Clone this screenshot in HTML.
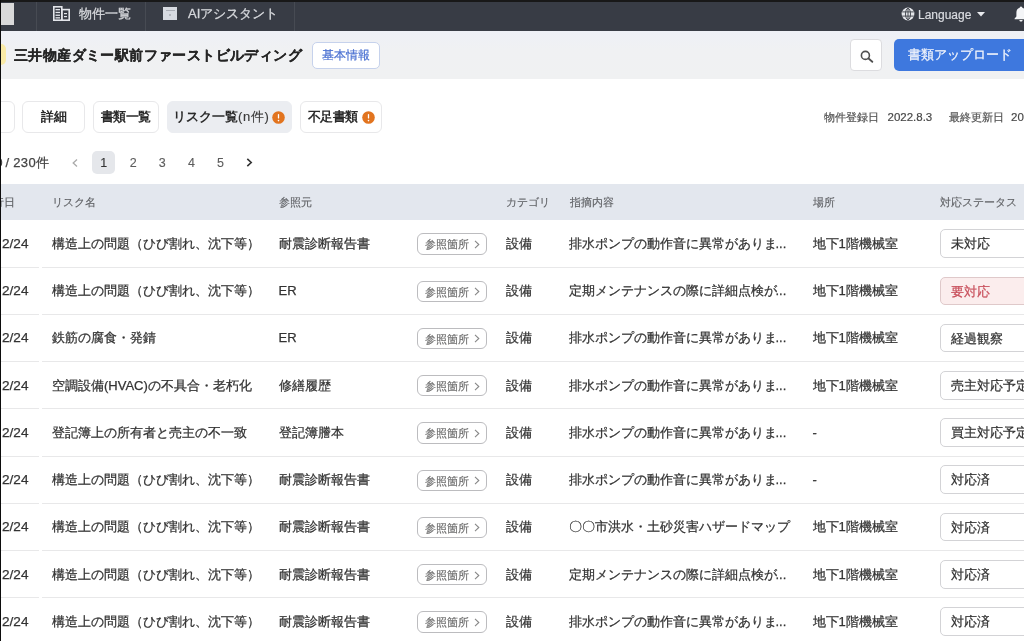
<!DOCTYPE html>
<html><head><meta charset="utf-8">
<style>
*{box-sizing:border-box;margin:0;padding:0}
html,body{width:1024px;height:641px;overflow:hidden;background:#fff;font-family:"Liberation Sans",sans-serif;color:#333}
.a{position:absolute;white-space:nowrap}
#top{position:absolute;left:0;top:0;width:1024px;height:31px;background:#383c45}
#topstrip{position:absolute;left:0;top:0;width:1024px;height:2px;background:#181818}
#leftstrip{position:absolute;left:0;top:0;width:1.4px;height:641px;background:#0c0c0c;z-index:10}
.div{position:absolute;top:2px;width:1px;height:28.5px;background:#474b53}
.navt{position:absolute;top:6px;font-size:13px;line-height:16px;color:#d6d8dc;-webkit-text-stroke:0.3px #d6d8dc}
#hdr{position:absolute;left:0;top:31px;width:1024px;height:48px;background:linear-gradient(#eef0f6,#f0f1f3 40%,#f0f1f2)}
.title{position:absolute;left:14px;top:46.3px;font-size:14px;line-height:18px;font-weight:bold;color:#262626;letter-spacing:0.4px;-webkit-text-stroke:0.2px #262626}
.btnb{position:absolute;left:311.7px;top:41.6px;width:68px;height:27px;border:1px solid #c6d2ec;border-radius:5px;background:#fff;color:#4a70d2;font-size:12px;line-height:25px;text-align:center;-webkit-text-stroke:0.2px #4a70d2}
.srch{position:absolute;left:850.4px;top:39.3px;width:32px;height:32px;border:1px solid #dcdcdf;border-radius:4px;background:#fff}
.upl{position:absolute;left:894px;top:39px;width:140px;height:32.3px;border-radius:5px;background:#3e78de;color:#f2f5fc;font-size:13px;line-height:32px;padding-left:14px;-webkit-text-stroke:0.25px #f2f5fc}
.tab{position:absolute;top:100.7px;height:32px;border:1px solid #e8e8ea;border-radius:6px;background:#fff;font-size:13px;line-height:30px;font-weight:bold;color:#2a2a2a;text-align:center;letter-spacing:-0.6px}
.tab.act{background:#ebedf1;border-color:#ebedf1}
.warn{display:inline-block;width:12.5px;height:12.5px;border-radius:50%;background:#e2731f;color:#fff;font-size:10px;line-height:12.5px;text-align:center;vertical-align:1px;margin-left:3px;font-weight:bold}
.dt{position:absolute;top:110px;font-size:11px;line-height:14px;color:#555;-webkit-text-stroke:0.2px #555}
.pg{position:absolute;top:150.5px;width:23px;height:23px;font-size:12.5px;line-height:25px;text-align:center;color:#5c5c5c;-webkit-text-stroke:0.1px currentColor}
#thead{position:absolute;left:0;top:184.4px;width:1024px;height:36px;background:#e3e7ee}
.th{position:absolute;top:195px;font-size:11px;line-height:14px;color:#606266;-webkit-text-stroke:0.15px #606266}
.row{position:absolute;left:0;width:1024px;height:47.24px;border-bottom:1px solid #e8e8e9}
.row::after{content:"";position:absolute;left:39.3px;bottom:-1px;width:2.6px;height:1px;background:#fff}
.td{position:absolute;top:15.5px;font-size:13px;line-height:16px;color:#333;-webkit-text-stroke:0.25px #333}
.ref{position:absolute;left:417.2px;top:13px;width:69.5px;height:21.3px;border:1px solid #bcbcbf;border-radius:6px;font-size:11px;line-height:20.5px;color:#6e6e6e;padding-left:7px;-webkit-text-stroke:0.2px #6e6e6e}
.ref svg{position:absolute;left:56px;top:5.5px}
.st{position:absolute;left:939.7px;top:8.9px;width:100px;height:28.7px;border:1px solid #d3d3d6;border-radius:5px;background:#fff;font-size:13px;line-height:27px;color:#333;padding-left:10px;-webkit-text-stroke:0.25px currentColor}
.st.red{background:#fbeded;border-color:#dfc9ca;color:#c9525e}
</style></head><body style="filter:blur(0.4px)">
<div id="top"></div>
<div id="topstrip"></div>
<div id="leftstrip"></div>
<div class="a" style="left:1px;top:2.5px;width:13px;height:22px;background:#d9d9d9"></div>
<div class="div" style="left:36px"></div>
<div class="div" style="left:145px"></div>
<div class="div" style="left:294px"></div>
<svg class="a" style="left:53px;top:6px" width="17" height="15" viewBox="0 0 17 15">
 <g fill="none" stroke="#e3e5ea" stroke-width="1.6">
  <rect x="0.8" y="0.8" width="8" height="13.4"/>
  <rect x="8.8" y="3.6" width="7.4" height="10.6"/>
 </g>
 <g fill="#e3e5ea"><rect x="2.5" y="3" width="4.5" height="1.3"/><rect x="2.5" y="5.8" width="4.5" height="1.3"/><rect x="2.5" y="8.6" width="4.5" height="1.3"/><rect x="2.5" y="11.2" width="4.5" height="1.3"/>
 <rect x="11" y="7" width="3" height="1.2"/><rect x="11" y="10" width="3" height="1.2"/></g>
</svg>
<div class="navt" style="left:79px">物件一覧</div>
<div class="a" style="left:163px;top:6.5px;width:14.3px;height:13.6px;background:#d6dae1"><div style="position:absolute;left:2.5px;top:3.2px;width:9px;height:1.2px;background:#a9adb5"></div><div style="position:absolute;left:6.3px;top:7.2px;width:2px;height:2px;background:#b3b7be"></div></div>
<div class="navt" style="left:188px">AIアシスタント</div>
<svg class="a" style="left:900.5px;top:7px" width="14" height="14" viewBox="0 0 14 14">
 <circle cx="7" cy="7" r="6.4" fill="#e4e6ea"/>
 <g fill="none" stroke="#3a3e46" stroke-width="0.9"><ellipse cx="7" cy="7" rx="2.5" ry="5.6"/><line x1="1.2" y1="4.9" x2="12.8" y2="4.9"/><line x1="1.2" y1="9.1" x2="12.8" y2="9.1"/><line x1="7" y1="1.2" x2="7" y2="12.8"/></g>
</svg>
<div class="navt" style="left:918px;top:6.5px;font-size:12px;color:#d9dbe0;-webkit-text-stroke:0.2px #d9dbe0">Language</div>
<svg class="a" style="left:976.5px;top:12px" width="8" height="5" viewBox="0 0 8 5"><path d="M0 0H8L4 4.5Z" fill="#e8eaee"/></svg>
<svg class="a" style="left:1014px;top:5.5px" width="14" height="16" viewBox="0 0 14 16"><path d="M7 0.5C8 0.5 8.3 1.3 8.3 1.8C10.6 2.4 11.6 4.4 11.6 6.8V10.5L13.4 12.6V13.2H0.6V12.6L2.4 10.5V6.8C2.4 4.4 3.4 2.4 5.7 1.8C5.7 1.3 6 0.5 7 0.5Z M5.4 14H8.6C8.6 15 7.9 15.5 7 15.5S5.4 15 5.4 14Z" fill="#f4f5f7"/></svg>

<div id="hdr"></div>
<div class="a" style="left:-5px;top:43.5px;width:11px;height:21.5px;border-radius:5px;background:#f9eaa6;filter:blur(0.6px)"></div>
<div class="title">三井物産ダミー駅前ファーストビルディング</div>
<div class="btnb">基本情報</div>
<div class="srch"><svg style="position:absolute;left:8.5px;top:9.5px" width="14" height="13" viewBox="0 0 14 13"><circle cx="5.4" cy="5.4" r="4" fill="none" stroke="#505050" stroke-width="1.6"/><line x1="8.3" y1="8.3" x2="12.3" y2="11.8" stroke="#505050" stroke-width="1.8" stroke-linecap="round"/></svg></div>
<div class="upl">書類アップロード</div>

<div class="tab" style="left:-40px;width:54.6px"></div>
<div class="tab" style="left:21.9px;width:63.6px">詳細</div>
<div class="tab" style="left:92.8px;width:65.8px">書類一覧</div>
<div class="tab act" style="left:166.6px;width:125.8px;text-align:left;padding-left:5.5px;letter-spacing:0">リスク一覧<span style="font-weight:normal;letter-spacing:0.6px;color:#3a3a3a;-webkit-text-stroke:0.15px #3a3a3a">(n件)</span><svg width="13" height="13" viewBox="0 0 13 13" style="position:absolute;top:9.5px;left:104.6px"><circle cx="6.5" cy="6.5" r="6.3" fill="#e2741f"/><rect x="5.85" y="3" width="1.3" height="4.6" rx="0.65" fill="#fff"/><circle cx="6.5" cy="9.6" r="0.8" fill="#fff"/></svg></div>
<div class="tab" style="left:300px;width:82px;text-align:left;padding-left:7px">不足書類<svg width="13" height="13" viewBox="0 0 13 13" style="position:absolute;top:9.5px;left:60.5px"><circle cx="6.5" cy="6.5" r="6.3" fill="#e2741f"/><rect x="5.85" y="3" width="1.3" height="4.6" rx="0.65" fill="#fff"/><circle cx="6.5" cy="9.6" r="0.8" fill="#fff"/></svg></div>

<div class="dt" style="left:823.5px">物件登録日</div>
<div class="dt" style="left:887.5px;font-size:11.5px;color:#444">2022.8.3</div>
<div class="dt" style="left:948.5px">最終更新日</div>
<div class="dt" style="left:1011px;font-size:11.5px;color:#444">2022.8.3</div>

<div class="a" style="left:-4.4px;top:154.8px;font-size:13px;line-height:16px;color:#444">0</div>
<div class="a" style="left:5.5px;top:154.8px;font-size:13px;line-height:16px;color:#444;letter-spacing:0.3px;-webkit-text-stroke:0.25px #444">/ 230件</div>
<svg class="a" style="left:72px;top:158.5px" width="6" height="8" viewBox="0 0 6 8"><path d="M5 0.5L1.2 4L5 7.5" fill="none" stroke="#aaa" stroke-width="1.3"/></svg>
<div class="pg" style="left:92.2px;background:#e5e7eb;border-radius:5px;color:#333">1</div>
<div class="pg" style="left:121.8px">2</div>
<div class="pg" style="left:150.8px">3</div>
<div class="pg" style="left:179.9px">4</div>
<div class="pg" style="left:209.1px">5</div>
<svg class="a" style="left:246px;top:157.8px" width="7" height="9" viewBox="0 0 7 9"><path d="M1.3 0.9L5.2 4.5L1.3 8.1" fill="none" stroke="#333" stroke-width="1.6"/></svg>

<div id="thead"></div>
<div class="th" style="left:-18.5px">発行日</div>
<div class="th" style="left:52px">リスク名</div>
<div class="th" style="left:278.5px">参照元</div>
<div class="th" style="left:505.5px">カテゴリ</div>
<div class="th" style="left:569.5px">指摘内容</div>
<div class="th" style="left:812.5px">場所</div>
<div class="th" style="left:940px">対応ステータス</div>

<div id="rows">
<div class="row" style="top:220.40px"><div class="td" style="left:2px;font-size:13.6px">2/24</div><div class="td" style="left:52px">構造上の問題（ひび割れ、沈下等）</div><div class="td" style="left:278.5px">耐震診断報告書</div><div class="ref">参照箇所<svg width="6" height="9" viewBox="0 0 6 9"><path d="M1 0.8L4.8 4.5L1 8.2" fill="none" stroke="#888" stroke-width="1.1"/></svg></div><div class="td" style="left:505.5px">設備</div><div class="td" style="left:569px">排水ポンプの動作音に異常がありま<span style="margin-left:-1.5px">...</span></div><div class="td" style="left:812.5px">地下1階機械室</div><div class="st ">未対応</div></div>
<div class="row" style="top:267.64px"><div class="td" style="left:2px;font-size:13.6px">2/24</div><div class="td" style="left:52px">構造上の問題（ひび割れ、沈下等）</div><div class="td" style="left:278.5px">ER</div><div class="ref">参照箇所<svg width="6" height="9" viewBox="0 0 6 9"><path d="M1 0.8L4.8 4.5L1 8.2" fill="none" stroke="#888" stroke-width="1.1"/></svg></div><div class="td" style="left:505.5px">設備</div><div class="td" style="left:569px">定期メンテナンスの際に詳細点検が<span style="margin-left:-1.5px">...</span></div><div class="td" style="left:812.5px">地下1階機械室</div><div class="st red">要対応</div></div>
<div class="row" style="top:314.88px"><div class="td" style="left:2px;font-size:13.6px">2/24</div><div class="td" style="left:52px">鉄筋の腐食・発錆</div><div class="td" style="left:278.5px">ER</div><div class="ref">参照箇所<svg width="6" height="9" viewBox="0 0 6 9"><path d="M1 0.8L4.8 4.5L1 8.2" fill="none" stroke="#888" stroke-width="1.1"/></svg></div><div class="td" style="left:505.5px">設備</div><div class="td" style="left:569px">排水ポンプの動作音に異常がありま<span style="margin-left:-1.5px">...</span></div><div class="td" style="left:812.5px">地下1階機械室</div><div class="st ">経過観察</div></div>
<div class="row" style="top:362.12px"><div class="td" style="left:2px;font-size:13.6px">2/24</div><div class="td" style="left:52px">空調設備(HVAC)の不具合・老朽化</div><div class="td" style="left:278.5px">修繕履歴</div><div class="ref">参照箇所<svg width="6" height="9" viewBox="0 0 6 9"><path d="M1 0.8L4.8 4.5L1 8.2" fill="none" stroke="#888" stroke-width="1.1"/></svg></div><div class="td" style="left:505.5px">設備</div><div class="td" style="left:569px">排水ポンプの動作音に異常がありま<span style="margin-left:-1.5px">...</span></div><div class="td" style="left:812.5px">地下1階機械室</div><div class="st ">売主対応予定</div></div>
<div class="row" style="top:409.36px"><div class="td" style="left:2px;font-size:13.6px">2/24</div><div class="td" style="left:52px">登記簿上の所有者と売主の不一致</div><div class="td" style="left:278.5px">登記簿謄本</div><div class="ref">参照箇所<svg width="6" height="9" viewBox="0 0 6 9"><path d="M1 0.8L4.8 4.5L1 8.2" fill="none" stroke="#888" stroke-width="1.1"/></svg></div><div class="td" style="left:505.5px">設備</div><div class="td" style="left:569px">排水ポンプの動作音に異常がありま<span style="margin-left:-1.5px">...</span></div><div class="td" style="left:812.5px">-</div><div class="st ">買主対応予定</div></div>
<div class="row" style="top:456.60px"><div class="td" style="left:2px;font-size:13.6px">2/24</div><div class="td" style="left:52px">構造上の問題（ひび割れ、沈下等）</div><div class="td" style="left:278.5px">耐震診断報告書</div><div class="ref">参照箇所<svg width="6" height="9" viewBox="0 0 6 9"><path d="M1 0.8L4.8 4.5L1 8.2" fill="none" stroke="#888" stroke-width="1.1"/></svg></div><div class="td" style="left:505.5px">設備</div><div class="td" style="left:569px">排水ポンプの動作音に異常がありま<span style="margin-left:-1.5px">...</span></div><div class="td" style="left:812.5px">-</div><div class="st ">対応済</div></div>
<div class="row" style="top:503.84px"><div class="td" style="left:2px;font-size:13.6px">2/24</div><div class="td" style="left:52px">構造上の問題（ひび割れ、沈下等）</div><div class="td" style="left:278.5px">耐震診断報告書</div><div class="ref">参照箇所<svg width="6" height="9" viewBox="0 0 6 9"><path d="M1 0.8L4.8 4.5L1 8.2" fill="none" stroke="#888" stroke-width="1.1"/></svg></div><div class="td" style="left:505.5px">設備</div><div class="td" style="left:569px">〇〇市洪水・土砂災害ハザードマップ</div><div class="td" style="left:812.5px">地下1階機械室</div><div class="st ">対応済</div></div>
<div class="row" style="top:551.08px"><div class="td" style="left:2px;font-size:13.6px">2/24</div><div class="td" style="left:52px">構造上の問題（ひび割れ、沈下等）</div><div class="td" style="left:278.5px">耐震診断報告書</div><div class="ref">参照箇所<svg width="6" height="9" viewBox="0 0 6 9"><path d="M1 0.8L4.8 4.5L1 8.2" fill="none" stroke="#888" stroke-width="1.1"/></svg></div><div class="td" style="left:505.5px">設備</div><div class="td" style="left:569px">定期メンテナンスの際に詳細点検が<span style="margin-left:-1.5px">...</span></div><div class="td" style="left:812.5px">地下1階機械室</div><div class="st ">対応済</div></div>
<div class="row" style="top:598.32px"><div class="td" style="left:2px;font-size:13.6px">2/24</div><div class="td" style="left:52px">構造上の問題（ひび割れ、沈下等）</div><div class="td" style="left:278.5px">耐震診断報告書</div><div class="ref">参照箇所<svg width="6" height="9" viewBox="0 0 6 9"><path d="M1 0.8L4.8 4.5L1 8.2" fill="none" stroke="#888" stroke-width="1.1"/></svg></div><div class="td" style="left:505.5px">設備</div><div class="td" style="left:569px">排水ポンプの動作音に異常がありま<span style="margin-left:-1.5px">...</span></div><div class="td" style="left:812.5px">地下1階機械室</div><div class="st ">対応済</div></div>
</div>
</body></html>
